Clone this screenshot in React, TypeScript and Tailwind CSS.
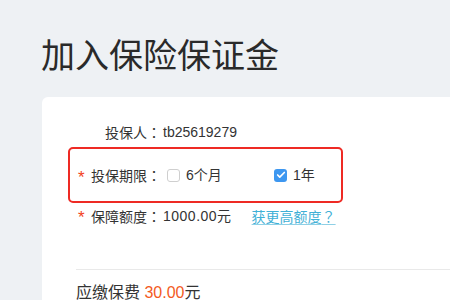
import { Check } from 'lucide-react'

const font = { fontFamily: '"Liberation Sans", "Noto Sans CJK SC", sans-serif' }
const cjk = { fontFamily: '"Noto Sans CJK SC", sans-serif' }
// centered full-width colon, like the reference
const colon = { fontFamily: '"Noto Sans CJK TC", sans-serif' }

function Label({ text, required }: { text: string; required?: boolean }) {
    return (
        <div className="flex items-center shrink-0">
            <span className="w-[13px] text-[#f2401d] text-[17px] leading-none pt-[4px]">{required ? '*' : ''}</span>
            <span className="w-[72px] text-right pr-[2px]" style={cjk}>
                {text}
                <span style={colon}>：</span>
            </span>
        </div>
    )
}

function Box({ checked }: { checked?: boolean }) {
    return checked ? (
        <span className="w-[13px] h-[13px] rounded-[3px] bg-[#3d97f0] flex items-center justify-center">
            <Check className="w-[10px] h-[10px] text-white" strokeWidth={4} />
        </span>
    ) : (
        <span className="w-[13px] h-[13px] rounded-[3px] bg-white border border-[#cfcfcf]" />
    )
}

export default function App() {
    return (
        <div className="w-[450px] h-[300px] overflow-hidden bg-[#eef1f4] text-[#333]" style={font}>
            {/* Page title */}
            <h1 className="pl-[41px] pt-[36px] h-[76px] text-[34px] leading-[40px] font-normal text-[#2a2a2a]">
                加入保险保证金
            </h1>

            {/* Card */}
            <div className="ml-[42px] mt-[21px] w-[440px] h-[220px] bg-white rounded-tl-[6px] pt-[25px] text-[14px] leading-[20px]">
                <div className="flex pl-[36px]">
                    <Label text="投保人" />
                    <span>tb25619279</span>
                </div>

                {/* Highlighted period row */}
                <div className="ml-[26px] mt-[5px] w-[275px] h-[56px] border-2 border-[#ee2a24] rounded-[5px] flex items-center pl-[8px]">
                    <Label text="投保期限" required />
                    <label className="flex items-center gap-[6px] w-[111px] pl-[4px]">
                        <Box />
                        <span>6个月</span>
                    </label>
                    <label className="flex items-center gap-[6px]">
                        <Box checked />
                        <span>1年</span>
                    </label>
                </div>

                <div className="flex items-center pl-[36px] mt-[2px]">
                    <Label text="保障额度" required />
                    <span className="tracking-[0.5px]">1000.00元</span>
                    <a className="ml-[20px] text-[#3fb0d6] underline underline-offset-2 decoration-[#8fd0e6]" style={cjk}>
                        获更高额度<span style={colon}>？</span>
                    </a>
                </div>

                <div className="ml-[34px] mt-[43px] border-t border-[#e9e9e9]" />

                <div className="pl-[34px] pt-[13px] text-[16px] leading-[20px]">
                    应缴保费 <span className="text-[#f35a1e]">30.00</span>元
                </div>
            </div>
        </div>
    )
}
